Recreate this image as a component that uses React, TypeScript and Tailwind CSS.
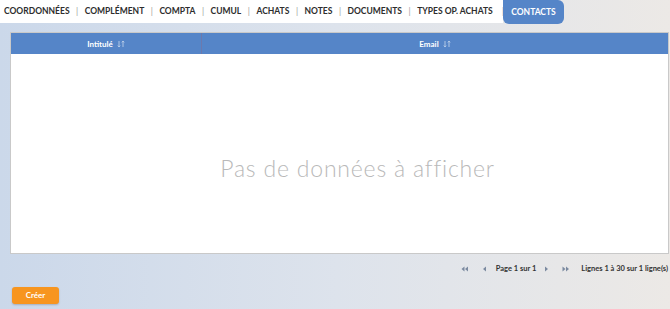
import React from "react";

const tabs = ["Coordonnées", "Complément", "Compta", "Cumul", "Achats", "Notes", "Documents", "Types op. achats"];

function SortIcon() {
  return (
    <svg width="8" height="8" viewBox="0 0 8 8" className="ml-1 inline-block opacity-60">
      <path d="M2 1v6M0.8 5.6L2 7l1.2-1.4M6 7V1M4.8 2.4L6 1l1.2 1.4" stroke="#ffffff" strokeWidth="0.9" fill="none" />
    </svg>
  );
}

function NavIcon({ dir, double }: { dir: "l" | "r"; double?: boolean }) {
  const tri = (x: number) =>
    dir === "l" ? `M${x + 3} 1.5L${x} 4l${3} 2.5z` : `M${x} 1.5L${x + 3} 4l-3 2.5z`;
  return (
    <svg width={double ? 8 : 5} height="8" viewBox={double ? "0 0 8 8" : "0 0 5 8"}>
      <path d={tri(double ? 0.5 : 1)} fill="#7b8aa0" />
      {double && <path d={tri(4)} fill="#7b8aa0" />}
    </svg>
  );
}

export default function App() {
  return (
    <div
      className="w-[670px] h-[309px] overflow-hidden bg-gradient-to-r from-[#cbd8ea] via-[#dde3ec] to-[#ece9e6] text-[#2d2d2d]"
      style={{ fontFamily: "Lato, 'Open Sans', sans-serif" }}
    >
      <div className="flex items-start h-[24px]">
        <div className="flex items-center h-[23px] w-[503px] bg-white pl-[4px] text-[8.5px] font-bold uppercase">
          {tabs.map((t, i) => (
            <React.Fragment key={t}>
              {i > 0 && <span className="mx-[6.5px] text-[#9a9a9a] font-normal">|</span>}
              <span>{t}</span>
            </React.Fragment>
          ))}
          <span className="ml-auto mr-[-1px] text-[#c4c4c4] font-normal">|</span>
        </div>
        <div className="h-[24px] w-[61px] flex items-center justify-center bg-[#5585c8] text-white text-[8.5px] font-bold uppercase rounded-b-[6px] rounded-tr-[6px]">
          Contacts
        </div>
      </div>

      <div className="ml-[10px] mr-[1px] mt-[8px] border border-[#c9c9c9] bg-white">
        <div className="flex h-[21px] bg-[#5585c8] text-white text-[8px] font-bold">
          <div className="w-[191px] flex items-center justify-center border-r border-[#6c79ad]">
            Intitulé <SortIcon />
          </div>
          <div className="flex-1 flex items-center justify-center">
            Email <SortIcon />
          </div>
        </div>
        <div className="h-[199px] flex items-center justify-center pt-[30px] pl-[36px]">
          <span className="text-[23px] font-light text-[#b9b9b9] tracking-[0.8px]">Pas de données à afficher</span>
        </div>
      </div>

      <div className="flex justify-end items-center mt-[9px] pr-[2px] text-[7.5px] font-bold text-[#333]">
        <NavIcon dir="l" double />
        <span className="ml-[13px]"><NavIcon dir="l" /></span>
        <span className="ml-[9px]">Page 1 sur 1</span>
        <span className="ml-[8px]"><NavIcon dir="r" /></span>
        <span className="ml-[13px]"><NavIcon dir="r" double /></span>
        <span className="ml-[11px]">Lignes 1 à 30 sur 1 ligne(s)</span>
      </div>

      <div className="pl-[12px] mt-[6px]">
        <button className="w-[47px] h-[17px] rounded-[3px] bg-[#f7951f] text-white text-[8px] font-bold shadow-[0_1px_2px_rgba(0,0,0,0.2)]">
          Créer
        </button>
      </div>
    </div>
  );
}
